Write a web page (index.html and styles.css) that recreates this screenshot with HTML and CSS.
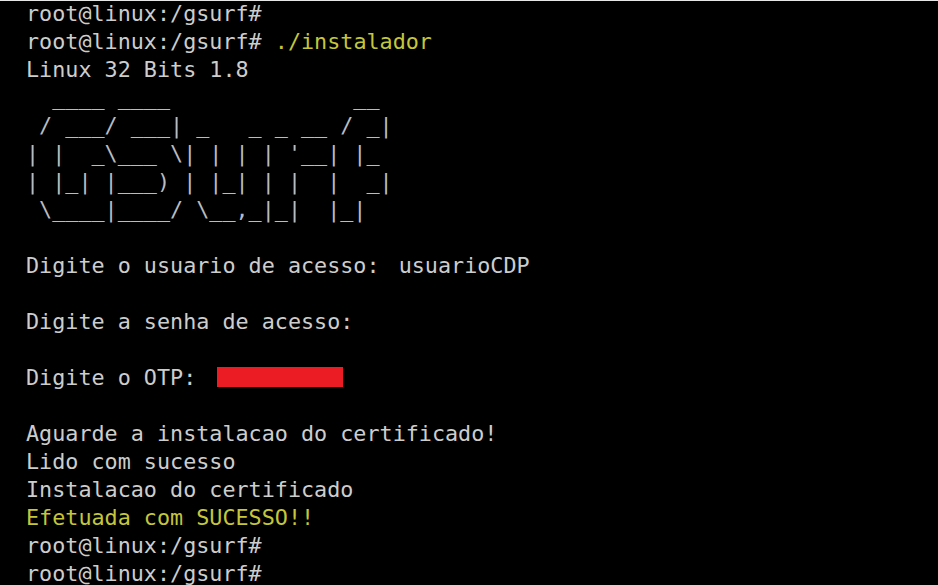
FILE: index.html
```
<!DOCTYPE html>
<html lang="pt">
<head>
<meta charset="utf-8">
<title>Terminal</title>
<link rel="stylesheet" href="styles.css">
</head>
<body>
<div class="term">
<div class="line">root@linux:/gsurf#</div>
<div class="line">root@linux:/gsurf# <span class="yellow">./instalador</span></div>
<div class="line">Linux 32 Bits 1.8</div>
<div class="line art">  ____ ____              __ </div>
<div class="line art"> / ___/ ___| _   _ _ __ / _|</div>
<div class="line art">| |  _\___ \| | | | '__| |_ </div>
<div class="line art">| |_| |___) | |_| | |  |  _|</div>
<div class="line art"> \____|____/ \__,_|_|  |_|  </div>
<div class="line"> </div>
<div class="line">Digite o usuario de acesso: <span class="user">usuarioCDP</span></div>
<div class="line"> </div>
<div class="line">Digite a senha de acesso:</div>
<div class="line"> </div>
<div class="line otp">Digite o OTP: <span class="redact"></span></div>
<div class="line"> </div>
<div class="line">Aguarde a instalacao do certificado!</div>
<div class="line">Lido com sucesso</div>
<div class="line">Instalacao do certificado</div>
<div class="line yellow">Efetuada com SUCESSO!!</div>
<div class="line">root@linux:/gsurf#</div>
<div class="line">root@linux:/gsurf#</div>
</div>
</body>
</html>
```
FILE: styles.css
```
html, body {
  margin: 0;
  padding: 0;
  background: #000;
  height: 100%;
  overflow: hidden;
}
.term {
  border-top: 1px solid #e6e6e6;
  padding-left: 26px;
  font-family: "DejaVu Sans Mono", "Liberation Mono", monospace;
  font-size: 21.75px;
  color: #cdcdcd;
  height: 584px;
  box-sizing: border-box;
}
.line {
  height: 28px;
  line-height: 28px;
  white-space: pre;
}
.line:first-child {
  margin-top: -1px;
}
.yellow {
  color: #c6c63a;
}
.art {
  color: #b9bcc0;
}
.user {
  margin-left: 6px;
}
.otp {
  display: flex;
  align-items: center;
}
.redact {
  display: inline-block;
  width: 126px;
  height: 20px;
  margin-left: 8px;
  margin-top: -2px;
  background: #ec1c24;
}
```
